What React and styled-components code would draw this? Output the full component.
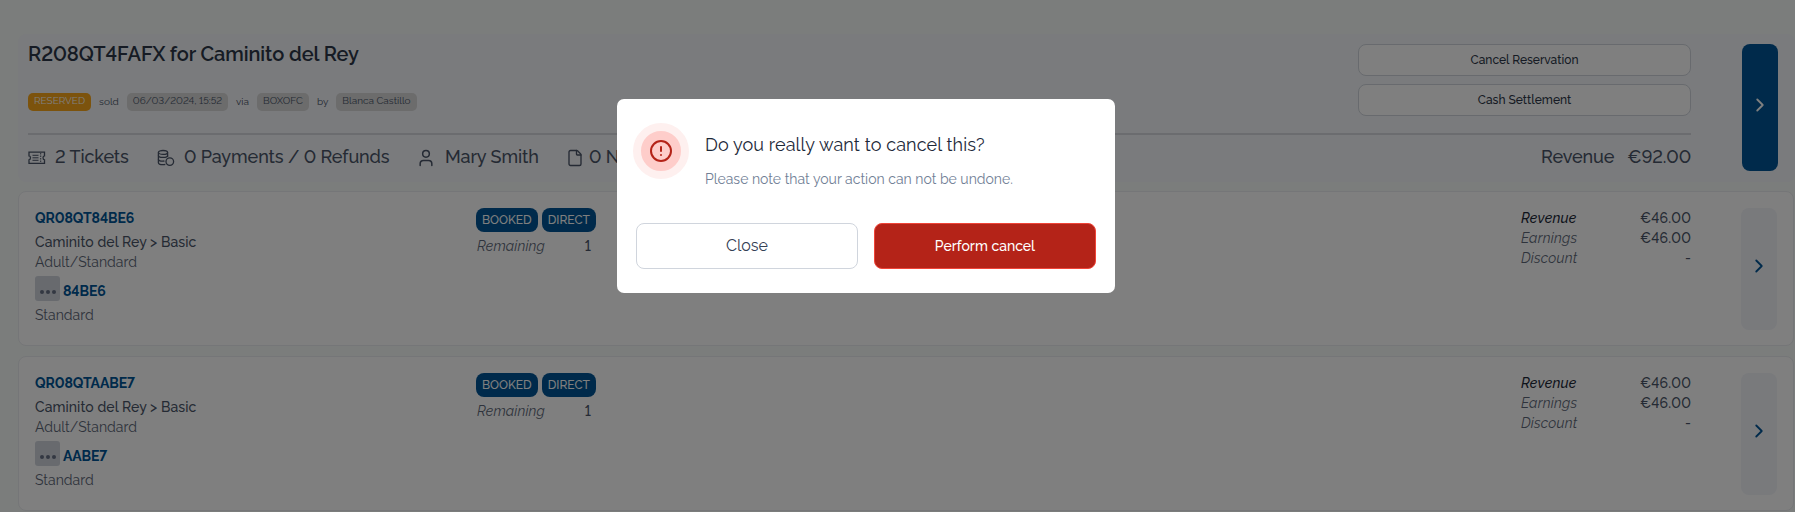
import React from "react";
import styled, { createGlobalStyle } from "styled-components";
import { ChevronRight, CircleAlert, File, User } from "lucide-react";

const tickets = [
  { code: "QR08QT84BE6", short: "84BE6" },
  { code: "QR08QTAABE7", short: "AABE7" },
];

function TicketIcon() {
  return (
    <svg width="18" height="18" viewBox="0 0 18 18" fill="none" stroke="currentColor" strokeWidth="1.3">
      <path d="M1 3.2h15.500v3.600a1.400 1.900 0 0 0 0 4v3.600H1v-3.600a1.400 1.900 0 0 0 0-4z" />
      <path d="M4.500 6.300h6M4.500 8.800h6M4.500 11.300h6" strokeWidth="1" />
      <path d="M12.700 4v10" strokeWidth="1" strokeDasharray="1.500 1" />
    </svg>
  );
}

function CoinsIcon() {
  return (
    <svg width="18" height="18" viewBox="0 0 18 18" fill="none" stroke="currentColor" strokeWidth="1.3">
      <ellipse cx="6" cy="3.4" rx="4.6" ry="1.900" />
      <path d="M1.400 3.400v10.400c0 1 2 1.900 4.600 1.900.9 0 1.700-.1 2.300-.3M10.600 3.400v4.600" />
      <path d="M1.400 6.500c0 1 2 1.900 4.600 1.900s4.600-.9 4.600-1.900M1.400 10.200c0 1 2 1.900 4.600 1.900.5 0 1 0 1.400-.1" />
      <circle cx="12.800" cy="12.600" r="3.800" />
    </svg>
  );
}

function App() {
  return (
    <>
      <GlobalStyle />
      <Page>
        <Header>
          <HeaderMain>
            <HeaderTop>
              <div>
                <Title>R208QT4FAFX for Caminito del Rey</Title>
                <Meta>
                  <Tag $reserved>RESERVED</Tag>
                  <span>sold</span>
                  <Tag>06/03/2024, 15:52</Tag>
                  <span>via</span>
                  <Tag>BOXOFC</Tag>
                  <span>by</span>
                  <Tag>Blanca Castillo</Tag>
                </Meta>
              </div>
              <Actions>
                <ActionButton>Cancel Reservation</ActionButton>
                <ActionButton>Cash Settlement</ActionButton>
              </Actions>
            </HeaderTop>
            <Stats>
              <Stat $width={129}>
                <TicketIcon />
                <span>2 Tickets</span>
              </Stat>
              <Stat $width={259}>
                <CoinsIcon />
                <span>0 Payments / 0 Refunds</span>
              </Stat>
              <Stat $width={150}>
                <User size={20} strokeWidth={1.8} />
                <span>Mary Smith</span>
              </Stat>
              <Stat $gap={5}>
                <File size={18} strokeWidth={1.8} />
                <span>0 Notes</span>
              </Stat>
              <Total>
                <span>Revenue</span>
                <span>€92.00</span>
              </Total>
            </Stats>
          </HeaderMain>
          <OpenButton $primary>
            <ChevronRight size={22} />
          </OpenButton>
        </Header>

        {tickets.map((ticket) => (
          <Card key={ticket.code}>
            <Details>
              <Code>{ticket.code}</Code>
              <Product>Caminito del Rey &gt; Basic</Product>
              <Muted>Adult/Standard</Muted>
              <Barcode>
                <Dots>
                  <i />
                  <i />
                  <i />
                </Dots>
                <Code as="span">{ticket.short}</Code>
              </Barcode>
              <Muted>Standard</Muted>
            </Details>
            <Status>
              <Badges>
                <Badge>BOOKED</Badge>
                <Badge>DIRECT</Badge>
              </Badges>
              <Remaining>
                <em>Remaining</em>
                <span>1</span>
              </Remaining>
            </Status>
            <Amounts>
              <Amount $strong>
                <em>Revenue</em>
                <span>€46.00</span>
              </Amount>
              <Amount>
                <em>Earnings</em>
                <span>€46.00</span>
              </Amount>
              <Amount>
                <em>Discount</em>
                <span>-</span>
              </Amount>
            </Amounts>
            <OpenButton>
              <ChevronRight size={22} />
            </OpenButton>
          </Card>
        ))}
      </Page>

      <Overlay>
        <Modal>
          <ModalBody>
            <AlertBadge>
              <CircleAlert size={24} />
            </AlertBadge>
            <div>
              <ModalTitle>Do you really want to cancel this?</ModalTitle>
              <ModalText>Please note that your action can not be undone.</ModalText>
            </div>
          </ModalBody>
          <ModalActions>
            <ModalButton>Close</ModalButton>
            <ModalButton $danger>Perform cancel</ModalButton>
          </ModalActions>
        </Modal>
      </Overlay>
    </>
  );
}

export default App;

const GlobalStyle = createGlobalStyle`
  * {
    box-sizing: border-box;
  }
  body {
    margin: 0;
    overflow: hidden;
    font-family: Raleway, Lato, sans-serif;
    font-variant-numeric: lining-nums;
    color: #4a5568;
  }
  button {
    font-family: inherit;
    padding: 0;
    cursor: pointer;
  }
`;

const Page = styled.div`
  height: 512px;
  overflow: hidden;
  padding: 34px 0 0 18px;
  background-color: #f7fbf8;
`;

const Header = styled.div`
  display: flex;
  justify-content: space-between;
  height: 148px;
  margin-bottom: 9px;
  padding: 10px 17px 11px 10px;
  border-radius: 8px;
  background-color: #f4f6fa;
`;

const HeaderMain = styled.div`
  width: 1663px;
`;

const HeaderTop = styled.div`
  display: flex;
  justify-content: space-between;
  height: 91px;
  border-bottom: 2px solid #d6d9de;
`;

const Title = styled.h2`
  margin: 0 0 29px;
  height: 20px;
  font-size: 20px;
  line-height: 20px;
  font-weight: 600;
  letter-spacing: -0.08px;
  color: #2d3748;
  white-space: nowrap;
`;

const Meta = styled.div`
  display: flex;
  align-items: center;
  gap: 8px;
  font-size: 10px;
  line-height: 16px;
`;

const Tag = styled.span`
  height: 18px;
  padding: 0 6px;
  border-radius: 5px;
  color: ${(props) => (props.$reserved ? "#fff" : "#4a5568")};
  background-color: ${(props) => (props.$reserved ? "#f9a61a" : "#d8d8d8")};
`;

const Actions = styled.div`
  display: flex;
  flex-direction: column;
  gap: 8px;
`;

const ActionButton = styled.button`
  width: 333px;
  height: 32px;
  border: 1px solid #d0d5dd;
  border-radius: 8px;
  background-color: #fff;
  font-size: 12px;
  font-weight: 500;
  color: #2d3748;
`;

const Stats = styled.div`
  display: flex;
  align-items: center;
  height: 43px;
  font-size: 18px;
  font-weight: 500;
  letter-spacing: -0.1px;
`;

const Stat = styled.div`
  display: flex;
  align-items: center;
  gap: ${(props) => props.$gap || 9}px;
  width: ${(props) => (props.$width ? `${props.$width}px` : "auto")};
  white-space: nowrap;

  svg {
    margin-top: 3px;
  }
`;

const Total = styled.div`
  display: flex;
  gap: 13px;
  margin-left: auto;
`;

const OpenButton = styled.button`
  display: flex;
  align-items: center;
  justify-content: center;
  width: 36px;
  padding-bottom: 6px;
  border: none;
  border-radius: 8px;
  color: ${(props) => (props.$primary ? "#fff" : "#005596")};
  background-color: ${(props) => (props.$primary ? "#005596" : "#f2f4f9")};
`;

const Card = styled.div`
  display: flex;
  height: 155px;
  margin: 0 1px 10px 0;
  padding: 16px 16px 15px;
  border: 1px solid #eaecf0;
  border-radius: 8px;
  background-color: #fff;
  font-size: 14px;
  line-height: 20px;
`;

const Details = styled.div`
  width: 441px;
`;

const Code = styled.div`
  font-weight: 700;
  letter-spacing: -0.1px;
  color: #005596;
`;

const Product = styled.div`
  margin-top: 4px;
  font-weight: 500;
  letter-spacing: 0.08px;
`;

const Muted = styled.div`
  color: #5d6778;
`;

const Barcode = styled.div`
  display: flex;
  align-items: flex-end;
  gap: 3px;
  margin: 4px 0;
`;

const Dots = styled.div`
  display: flex;
  justify-content: center;
  gap: 2px;
  width: 25px;
  height: 25px;
  padding-top: 14px;
  border-radius: 3px;
  background-color: #d0d5dd;

  i {
    width: 4px;
    height: 4px;
    border-radius: 2px;
    background-color: #667085;
  }
`;

const Status = styled.div`
  flex: 1;
`;

const Badges = styled.div`
  display: flex;
  gap: 4px;
`;

const Badge = styled.span`
  height: 24px;
  padding: 0 6px;
  border-radius: 8px;
  background-color: #005596;
  color: #fff;
  font-size: 12px;
  font-weight: 500;
  line-height: 24px;
`;

const Remaining = styled.div`
  display: flex;
  justify-content: space-between;
  width: 114px;
  margin: 4px 0 0 1px;

  em {
    letter-spacing: 0.15px;
    color: #5d6778;
  }
  span {
    font-weight: 500;
  }
`;

const Amounts = styled.div`
  width: 170px;
  margin-right: 50px;
`;

const Amount = styled.div`
  display: flex;
  justify-content: space-between;
  font-weight: 500;
  letter-spacing: 0.2px;

  em {
    color: ${(props) => (props.$strong ? "#1d2939" : "#5d6778")};
    font-weight: ${(props) => (props.$strong ? 500 : 400)};
  }
`;

const Overlay = styled.div`
  position: fixed;
  inset: 0;
  display: flex;
  justify-content: center;
  align-items: flex-start;
  padding: 99px 63px 0 0;
  background-color: rgba(0, 0, 0, 0.5);
`;

const Modal = styled.div`
  width: 498px;
  height: 194px;
  padding: 24px 19px 24px 16px;
  border-radius: 7px;
  background-color: #fff;
`;

const ModalBody = styled.div`
  display: flex;
  gap: 16px;
  height: 100px;
`;

const AlertBadge = styled.div`
  display: flex;
  align-items: center;
  justify-content: center;
  width: 56px;
  height: 56px;
  border: 8px solid #fef0ef;
  border-radius: 50%;
  background-color: #fecdca;
  color: #b42318;
`;

const ModalTitle = styled.h3`
  margin: 8px 0 0;
  font-size: 18px;
  line-height: 28px;
  font-weight: 400;
  letter-spacing: 0.11px;
  color: #1d2939;
`;

const ModalText = styled.p`
  margin: 10px 0 0;
  font-size: 14px;
  line-height: 20px;
  color: #718096;
`;

const ModalActions = styled.div`
  display: flex;
  gap: 16px;
  margin-left: 3px;
`;

const ModalButton = styled.button`
  width: 222px;
  height: 46px;
  border: 1px solid ${(props) => (props.$danger ? "#f04438" : "#d0d5dd")};
  border-radius: 8px;
  padding-bottom: 1px;
  background-color: ${(props) => (props.$danger ? "#b42318" : "#fff")};
  color: ${(props) => (props.$danger ? "#fff" : "#344054")};
  font-size: ${(props) => (props.$danger ? 14 : 16)}px;
  font-weight: ${(props) => (props.$danger ? 500 : 400)};
`;
